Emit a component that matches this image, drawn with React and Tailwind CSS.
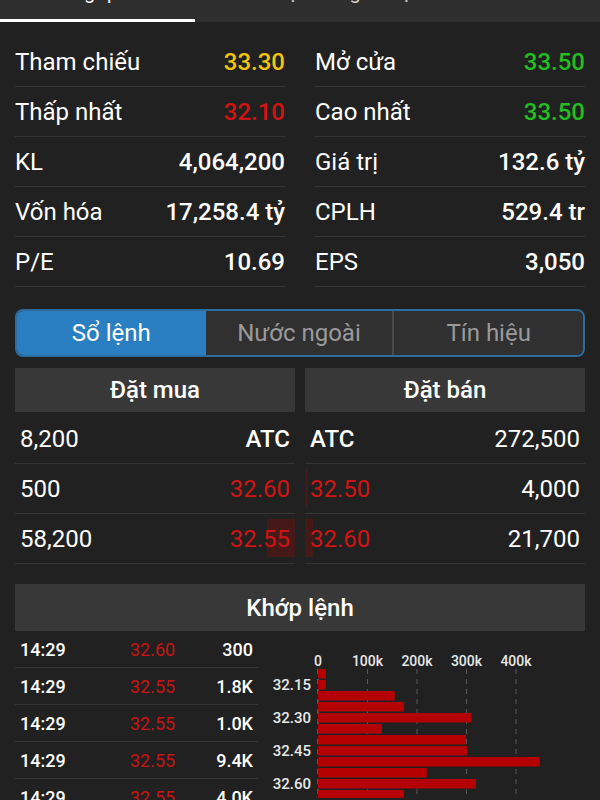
const stats = [
  ['Tham chiếu', '33.30', 'text-[#f2c40f]', 'Mở cửa', '33.50', 'text-[#22bf22]'],
  ['Thấp nhất', '32.10', 'text-[#d01414]', 'Cao nhất', '33.50', 'text-[#22bf22]'],
  ['KL', '4,064,200', 'text-white', 'Giá trị', '132.6 tỷ', 'text-white'],
  ['Vốn hóa', '17,258.4 tỷ', 'text-white', 'CPLH', '529.4 tr', 'text-white'],
  ['P/E', '10.69', 'text-white', 'EPS', '3,050', 'text-white'],
];

const bids = [
  { qty: '8,200', price: 'ATC', atc: true, depth: 0 },
  { qty: '500', price: '32.60', depth: 0 },
  { qty: '58,200', price: '32.55', depth: 28 },
];

const asks = [
  { qty: '272,500', price: 'ATC', atc: true, depth: 0 },
  { qty: '4,000', price: '32.50', depth: 3 },
  { qty: '21,700', price: '32.60', depth: 8 },
];

const trades = [
  ['14:29', '32.60', '300'],
  ['14:29', '32.55', '1.8K'],
  ['14:29', '32.55', '1.0K'],
  ['14:29', '32.55', '9.4K'],
  ['14:29', '32.55', '4.0K'],
];

// volume per price step, in thousands
const volumes = [16, 16, 155, 174, 309, 129, 299, 301, 448, 220, 319, 174, 120];

function StatRow ({ label, value, color }) {
  return (
    <div className="h-[50px] flex items-center justify-between border-b border-[#353535]">
      <span className="text-white">{label}</span>
      <span className={`font-medium ${color}`}>{value}</span>
    </div>
  );
}

function VolumeChart () {
  const x0 = 60;
  const perK = 0.495;
  const ticks = [0, 100, 200, 300, 400];
  return (
    <svg width="327" height="167" className="block">
      {ticks.map((t) => (
        <g key={t}>
          <text x={x0 + t * perK} y="35" textAnchor="middle" fill="#e8e8e8" fontSize="14" fontWeight="500">
            {t === 0 ? '0' : `${t}k`}
          </text>
          <line x1={x0 + t * perK} y1="38" x2={x0 + t * perK} y2="167" stroke="#8a8a8a" strokeWidth="1" strokeDasharray="5 5" opacity={t === 0 ? 1 : 0.55} />
        </g>
      ))}
      {volumes.map((v, i) => (
        <rect key={i} x={x0} y={38 + i * 11} width={v * perK} height="9.5" fill="#b40000" />
      ))}
      {['32.15', '32.30', '32.45', '32.60'].map((p, i) => (
        <text key={p} x="53" y={59 + i * 33} textAnchor="end" fill="#e8e8e8" fontSize="15" fontWeight="500">
          {p}
        </text>
      ))}
    </svg>
  );
}

export default function App () {
  return (
    <div className="w-[600px] h-[800px] overflow-hidden bg-[#212121] text-white" style={{ fontFamily: 'Roboto, "Noto Sans", sans-serif' }}>
      {/* Top tabs (scrolled, only descenders visible) */}
      <div className="h-[22px] bg-[#2e2e2e] flex overflow-hidden">
        <div className="w-[195px] h-full border-b-[3px] border-white flex justify-center">
          <span className="text-[20px] leading-none -mt-[18px] text-white">Tổng quan</span>
        </div>
        <div className="w-[230px] h-full flex justify-center pl-[90px]">
          <span className="text-[20px] leading-none -mt-[18px] text-[#cfcfcf] whitespace-nowrap">Lịch sử giao dịch</span>
        </div>
      </div>

      {/* Stats */}
      <div className="px-[15px] pt-[15px] grid grid-cols-2 gap-x-[30px] text-[24px]">
        <div>
          {stats.map((s) => (
            <StatRow key={s[0]} label={s[0]} value={s[1]} color={s[2]} />
          ))}
        </div>
        <div>
          {stats.map((s) => (
            <StatRow key={s[3]} label={s[3]} value={s[4]} color={s[5]} />
          ))}
        </div>
      </div>

      {/* Segmented control */}
      <div className="mx-[15px] mt-[22px] h-[48px] rounded-[8px] border-2 border-[#2c6d9e] overflow-hidden grid grid-cols-3 text-[24px]">
        <div className="bg-[#2a7fc2] flex items-center justify-center text-white">Sổ lệnh</div>
        <div className="bg-[#303030] flex items-center justify-center text-[#9a9a9a] border-r-2 border-[#4a4a4a]">Nước ngoài</div>
        <div className="bg-[#303030] flex items-center justify-center text-[#9a9a9a]">Tín hiệu</div>
      </div>

      {/* Order book */}
      <div className="mx-[15px] mt-[11px] grid grid-cols-2 gap-x-[10px] text-[24px]">
        <div>
          <div className="h-[44px] bg-[#383838] flex items-center justify-center font-medium">Đặt mua</div>
          <div className="mt-[2px]">
            {bids.map((b) => (
              <div key={b.qty} className="relative h-[50px] flex items-center justify-between px-[5px] border-b border-[#353535]">
                {b.depth > 0 && (
                  <div className="absolute right-0 top-[5px] bottom-[6px] bg-[#b40000]/25" style={{ width: b.depth }} />
                )}
                <span className="relative">{b.qty}</span>
                <span className={`relative ${b.atc ? 'font-medium text-white' : 'text-[#d01414]'}`}>{b.price}</span>
              </div>
            ))}
          </div>
        </div>
        <div>
          <div className="h-[44px] bg-[#383838] flex items-center justify-center font-medium">Đặt bán</div>
          <div className="mt-[2px]">
            {asks.map((a) => (
              <div key={a.qty} className="relative h-[50px] flex items-center justify-between px-[5px] border-b border-[#353535]">
                {a.depth > 0 && (
                  <div className="absolute left-0 top-[5px] bottom-[6px] bg-[#b40000]/25" style={{ width: a.depth }} />
                )}
                <span className={`relative ${a.atc ? 'font-medium text-white' : 'text-[#d01414]'}`}>{a.price}</span>
                <span className="relative">{a.qty}</span>
              </div>
            ))}
          </div>
        </div>
      </div>

      {/* Matched orders */}
      <div className="mx-[15px] mt-[20px] h-[47px] bg-[#383838] flex items-center justify-center text-[24px] font-medium">
        Khớp lệnh
      </div>
      <div className="ml-[15px] flex">
        <div className="w-[243px] text-[18px]">
          {trades.map((t, i) => (
            <div key={i} className="h-[37px] flex items-center px-[5px] border-b border-[#353535]">
              <span className="w-[110px] font-medium">{t[0]}</span>
              <span className="text-[#c81414]">{t[1]}</span>
              <span className="flex-1 text-right font-medium">{t[2]}</span>
            </div>
          ))}
        </div>
        <VolumeChart />
      </div>
    </div>
  );
}
